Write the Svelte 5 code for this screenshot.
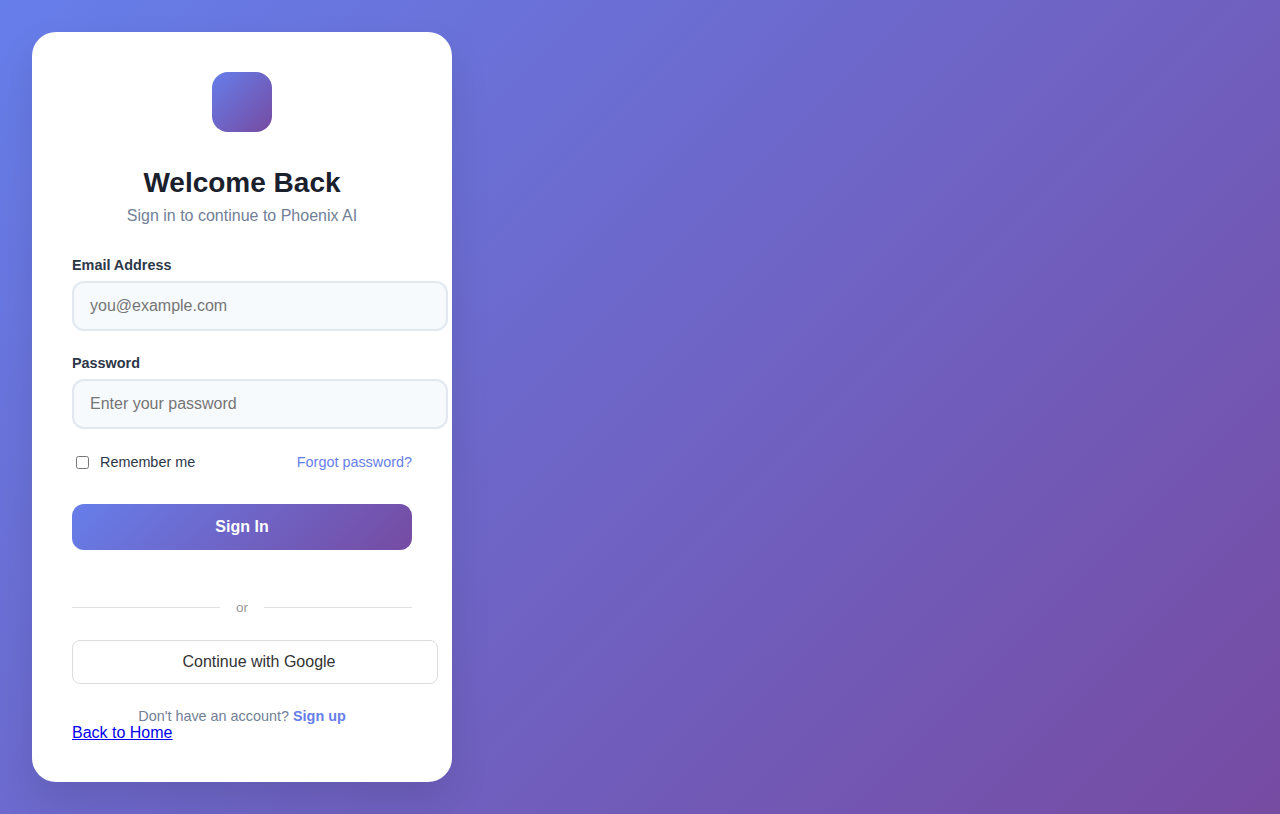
<script>
  let email = $state('');
  let password = $state('');
  let remember = $state(false);
</script>

<main class="page">
  <section class="card">
    <div class="logo"></div>
    <h1>Welcome Back</h1>
    <p class="subtitle">Sign in to continue to Phoenix AI</p>
    <form onsubmit={(e) => e.preventDefault()}>
      <div class="field">
        <label for="email">Email Address</label>
        <input id="email" type="email" placeholder="you@example.com" bind:value={email} />
      </div>
      <div class="field">
        <label for="password">Password</label>
        <input id="password" type="password" placeholder="Enter your password" bind:value={password} />
      </div>
      <div class="options">
        <label class="remember"><input type="checkbox" bind:checked={remember} />Remember me</label>
        <a class="forgot" href="#forgot">Forgot password?</a>
      </div>
      <button class="submit" type="submit">Sign In</button>
    </form>
    <div class="divider"><span>or</span></div>
    <a class="google" href="#google">Continue with Google</a>
    <p class="signup">Don't have an account? <a href="#signup">Sign up</a></p>
    <a class="home" href="#home">Back to Home</a>
  </section>
</main>

<style>
  :global(body) {
    margin: 0;
    font-family: "Liberation Sans", Arial, sans-serif;
  }
  .page {
    box-sizing: border-box;
    min-height: 814px;
    padding: 32px;
    background: linear-gradient(135deg, #667eea 0%, #764ba2 100%);
  }
  .card {
    box-sizing: border-box;
    width: 420px;
    height: 750px;
    padding: 40px;
    border-radius: 24px;
    background: #fff;
    box-shadow: 0 20px 40px rgba(0, 0, 0, 0.1);
  }
  .logo {
    width: 60px;
    height: 60px;
    margin: 0 auto 34px;
    border-radius: 16px;
    background: linear-gradient(135deg, #667eea, #764ba2);
  }
  h1 {
    margin: 0 0 7px;
    font-size: 28px;
    line-height: 34px;
    text-align: center;
    color: #1a202c;
  }
  .subtitle {
    margin: 0 0 32px;
    font-size: 16px;
    line-height: 18px;
    text-align: center;
    color: #718096;
  }
  .field {
    margin-bottom: 24px;
  }
  .field label {
    display: block;
    margin-bottom: 8px;
    font-size: 14.4px;
    line-height: 16px;
    font-weight: 600;
    color: #2d3748;
  }
  .field input {
    display: block;
    box-sizing: border-box;
    width: 376px;
    height: 50px;
    padding: 14px 16px;
    border: 2px solid #e2e8f0;
    border-radius: 12px;
    background: #f7fafc;
    font: 16px "Liberation Sans", Arial, sans-serif;
  }
  .options {
    display: flex;
    justify-content: space-between;
    align-items: flex-start;
    height: 19px;
    margin-bottom: 32px;
    font-size: 14.4px;
    line-height: 18px;
  }
  .remember {
    display: flex;
    align-items: flex-start;
    gap: 8px;
    color: #2d3748;
  }
  .remember input {
    margin: 3px 3px 3px 4px;
  }
  .forgot {
    color: #667eea;
    text-decoration: none;
  }
  .submit {
    display: block;
    width: 100%;
    height: 46px;
    border: 0;
    border-radius: 12px;
    background: linear-gradient(135deg, #667eea, #764ba2);
    color: #fff;
    font: 600 16px "Liberation Sans", Arial, sans-serif;
  }
  .divider {
    display: flex;
    align-items: center;
    gap: 16px;
    height: 16px;
    margin: 49px 0 25px;
    font-size: 13.6px;
    color: #999;
  }
  .divider::before,
  .divider::after {
    content: "";
    flex: 1;
    height: 1px;
    background: #e0e0e0;
  }
  .google {
    display: block;
    box-sizing: border-box;
    width: 366px;
    height: 44px;
    padding: 12px 12px 12px 20px;
    border: 1px solid #ddd;
    border-radius: 8px;
    line-height: 18px;
    text-align: center;
    text-decoration: none;
    color: #333;
  }
  .signup {
    margin: 24px 0 0;
    font-size: 14.4px;
    line-height: 16px;
    text-align: center;
    color: #718096;
  }
  .signup a {
    font-weight: 600;
    color: #667eea;
    text-decoration: none;
  }
  .home {
    display: block;
    width: max-content;
    line-height: 18px;
    color: #0000ee;
  }
</style>
